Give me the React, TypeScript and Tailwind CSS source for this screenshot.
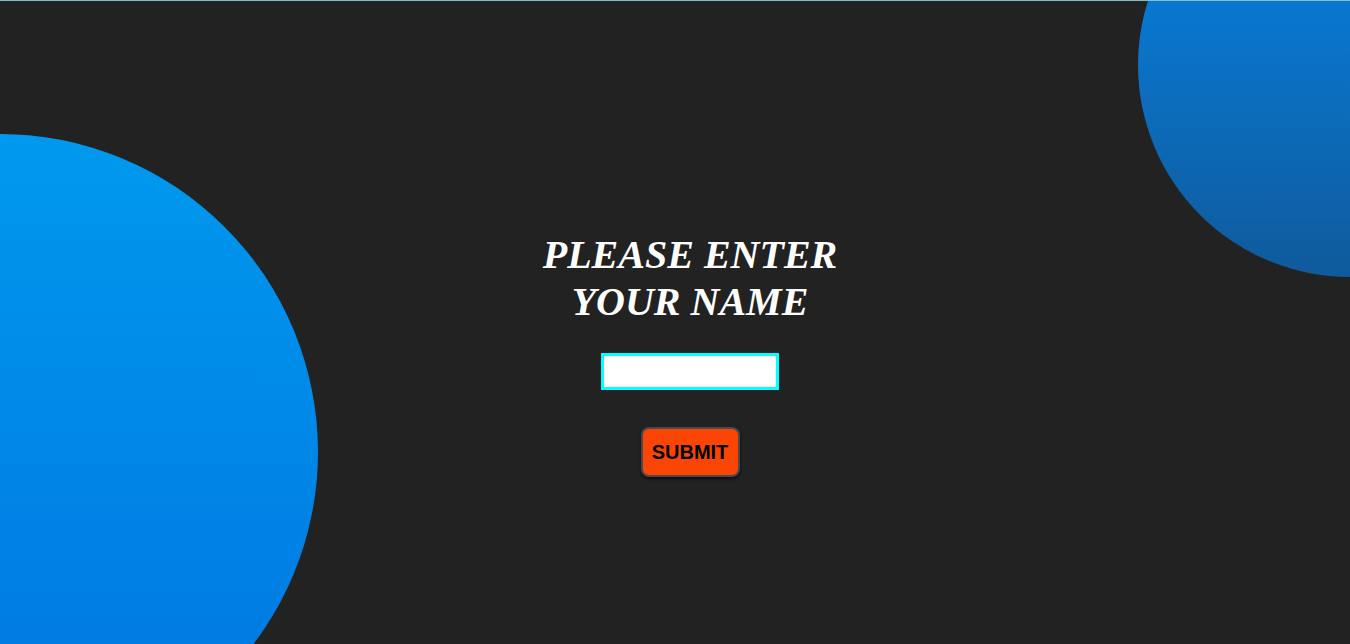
import { useState } from "react";

export default function App() {
  const [name, setName] = useState("");

  return (
    <div className="relative w-full h-[644px] overflow-hidden bg-[#222222] border-t border-[#86bcc6]">
      {/* decorative circles */}
      <div className="absolute left-[-318px] top-[133px] w-[636px] h-[636px] rounded-full bg-gradient-to-b from-[#0099ee] to-[#0074e0]" />
      <div className="absolute left-[1138px] top-[-148px] w-[424px] h-[424px] rounded-full bg-gradient-to-b from-[#0088ee] to-[#0f5a9c]" />

      <div className="relative flex flex-col items-center pt-[230px] pl-[30px]">
        <h1 className="text-white text-[40px] leading-[47px] font-bold italic text-center font-['Liberation_Serif','Times_New_Roman',serif]">
          PLEASE ENTER
          <br />
          YOUR NAME
        </h1>
        <input
          type="text"
          value={name}
          onChange={(e) => setName(e.target.value)}
          className="mt-[28px] w-[178px] h-[37px] bg-white border-[3px] border-[#00ffff] outline-none px-1"
        />
        <button
          onClick={() => alert(name)}
          className="mt-[37px] w-[99px] h-[50px] bg-[#fa4505] border-2 border-[#4a4a4a] rounded-lg shadow-[0_2px_3px_rgba(0,0,0,0.6)] text-black font-bold text-[20px] font-['Liberation_Sans',Arial,sans-serif]"
        >
          SUBMIT
        </button>
      </div>
    </div>
  );
}
